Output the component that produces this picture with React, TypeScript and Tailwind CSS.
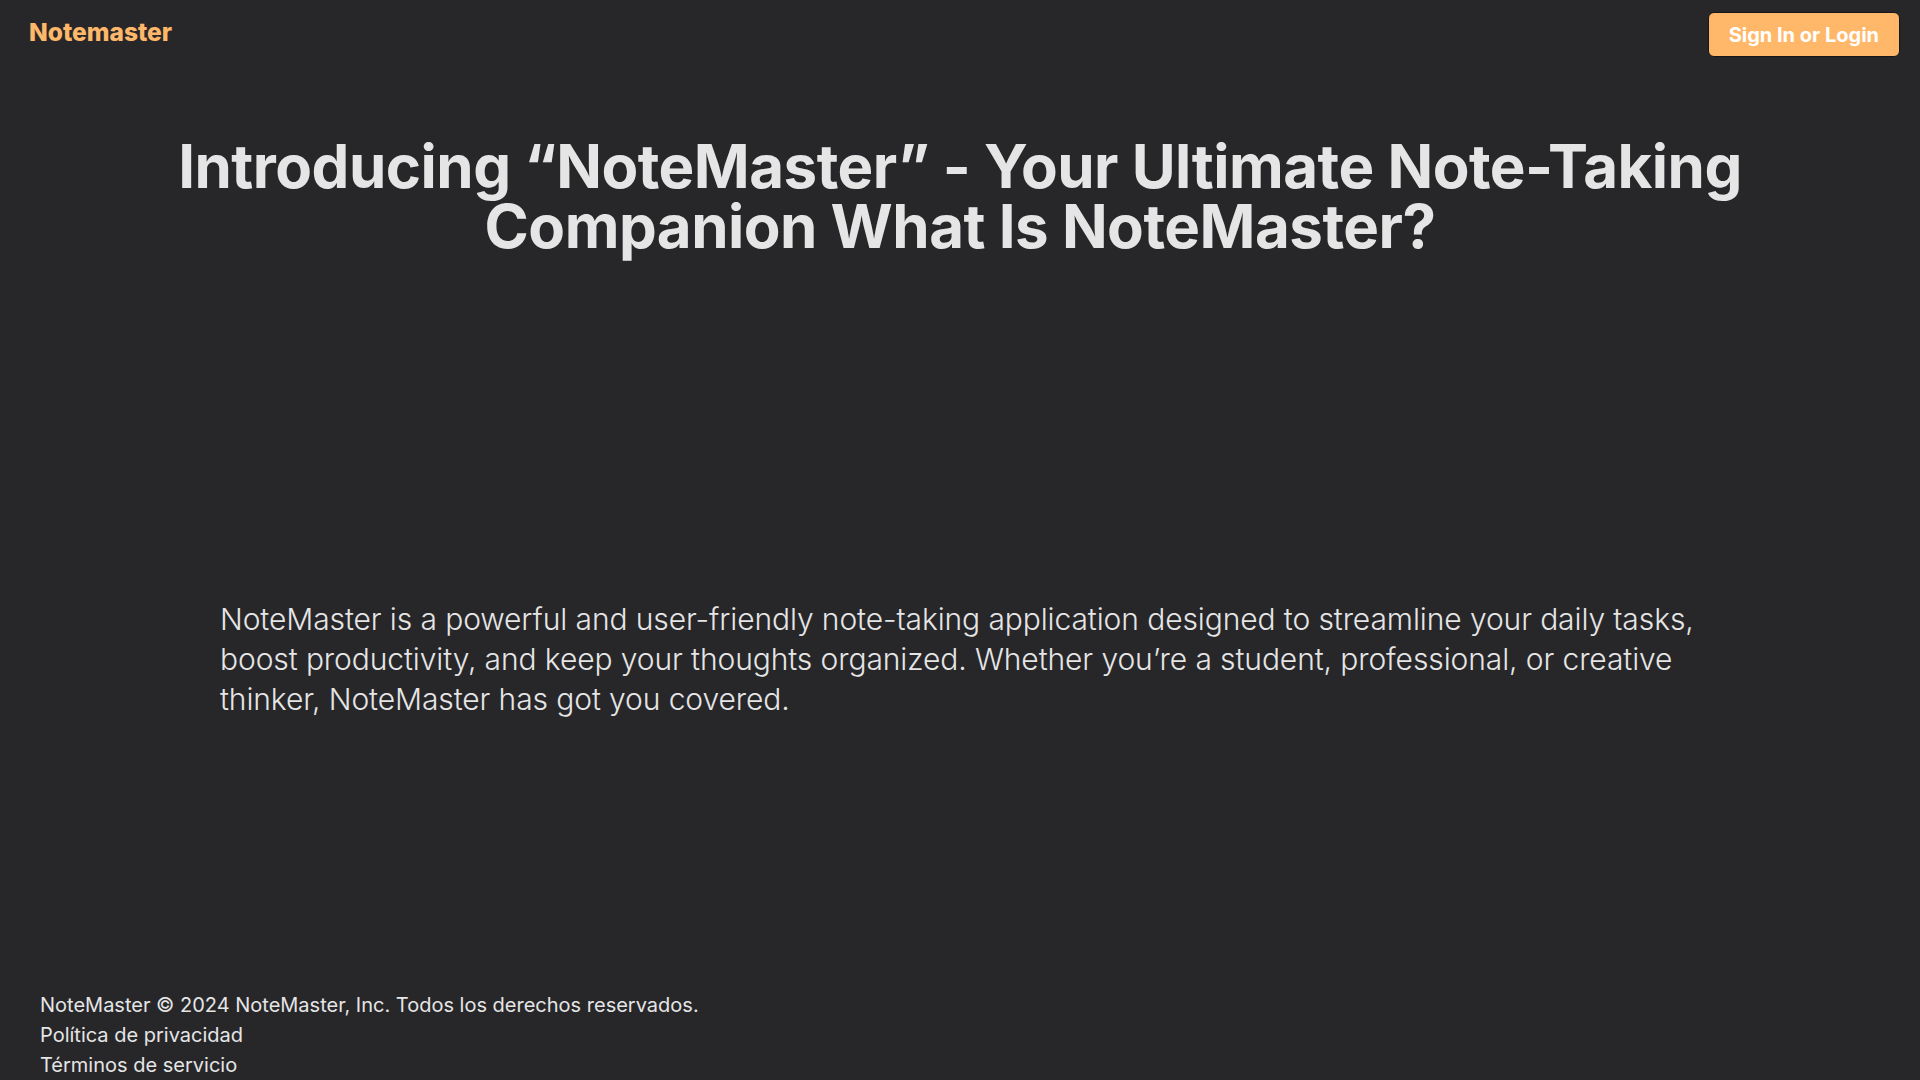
const footerLinks = ["Política de privacidad", "Términos de servicio"];

function Header() {
    return (
        <header className="flex justify-between items-start pl-[29px] pr-5">
            <a href="#" className="mt-4 text-[24.5px] font-extrabold text-orange-300 leading-8">
                Notemaster
            </a>
            <button className="mt-3 h-[45px] px-5 rounded-md border border-[#15151a] bg-orange-300 text-xl font-bold text-white">
                Sign In or Login
            </button>
        </header>
    );
}

function Hero() {
    return (
        <main className="flex flex-col items-center">
            <h1 className="mt-[79px] text-center text-6xl leading-[60px] font-bold tracking-[-0.5px] text-neutral-200">
                Introducing “NoteMaster” - Your Ultimate Note-Taking
                <br />
                Companion What Is NoteMaster?
            </h1>
            <p className="mt-[343px] w-[1500px] pl-[10px] text-3xl leading-10 font-light tracking-[-0.1px] text-neutral-200">
                NoteMaster is a powerful and user-friendly note-taking application designed to streamline your daily
                tasks, boost productivity, and keep your thoughts organized. Whether you’re a student, professional, or
                creative thinker, NoteMaster has got you covered.
            </p>
        </main>
    );
}

function Footer() {
    return (
        <footer className="mt-auto pl-10 text-xl leading-[30px] text-neutral-200">
            <p>NoteMaster © 2024 NoteMaster, Inc. Todos los derechos reservados.</p>
            {footerLinks.map((link) => (
                <a key={link} href="#" className="block">
                    {link}
                </a>
            ))}
        </footer>
    );
}

export default function App() {
    return (
        <div className="min-h-screen flex flex-col bg-zinc-800 font-['Inter',sans-serif]">
            <Header />
            <Hero />
            <Footer />
        </div>
    );
}
